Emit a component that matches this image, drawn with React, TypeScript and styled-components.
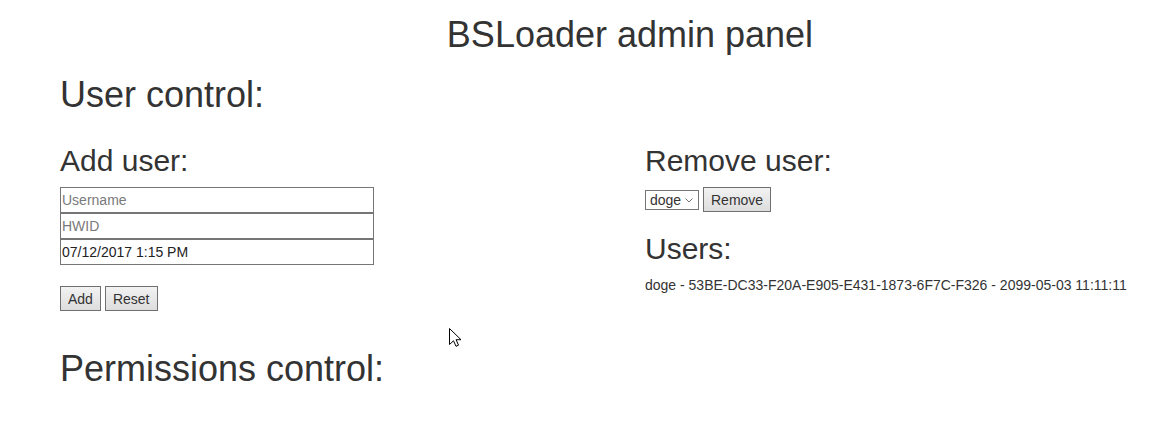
import React from "react";
import styled, { createGlobalStyle } from "styled-components";

const GlobalStyle = createGlobalStyle`
  html, body {
    margin: 0;
    padding: 0;
    background: #ffffff;
    overflow: hidden;
  }
  body {
    font-family: "Liberation Sans", Arial, sans-serif;
    font-size: 14px;
    line-height: 20px;
    color: #333333;
  }
`;

const Page = styled.div`
  position: relative;
  width: 1170px;
  box-sizing: border-box;
  margin-left: 45px;
  padding: 0 15px;
  display: flex;
  flex-direction: column;
`;

const Title = styled.h1`
  font-size: 36px;
  font-weight: 400;
  line-height: 1.1;
  margin: 15px 0 20px;
  text-align: center;
`;

const SectionTitle = styled.h1<{ $top?: number }>`
  font-size: 36px;
  font-weight: 400;
  line-height: 1.1;
  margin: ${(p) => p.$top ?? 0}px 0 10px;
`;

const Row = styled.div`
  display: grid;
  grid-template-columns: 585px 585px;
  margin: 0 -15px;
  align-items: start;
`;

const Col = styled.div`
  padding: 0 15px;
  display: flex;
  flex-direction: column;
  align-items: flex-start;
`;

const SubTitle = styled.h2`
  font-size: 30px;
  font-weight: 400;
  line-height: 1.1;
  margin: 20px 0 10px;
`;

const Fields = styled.div`
  display: flex;
  flex-direction: column;
`;

const TextField = styled.input`
  box-sizing: border-box;
  width: 314px;
  height: 26px;
  margin: 0;
  padding: 0 1px;
  border: 1px solid #767676;
  border-radius: 0;
  font-family: "Liberation Sans", Arial, sans-serif;
  font-size: 14px;
  color: #222222;
  background: #ffffff;
  outline: none;
  &::placeholder {
    color: #7a7a7a;
  }
`;

const ButtonBar = styled.div<{ $top?: number }>`
  display: flex;
  align-items: center;
  gap: 4px;
  margin-top: ${(p) => p.$top ?? 0}px;
`;

const Button = styled.button`
  box-sizing: border-box;
  height: 25px;
  padding: 0 7px;
  margin: 0;
  border: 1px solid #707070;
  border-radius: 0;
  background: linear-gradient(#f2f2f2, #dddddd);
  font-family: "Liberation Sans", Arial, sans-serif;
  font-size: 14px;
  color: #333333;
  cursor: default;
`;

const SelectWrap = styled.div`
  position: relative;
  display: inline-flex;
`;

const Select = styled.select`
  box-sizing: border-box;
  appearance: none;
  -webkit-appearance: none;
  width: 54px;
  height: 20px;
  margin: 0;
  padding: 0 0 0 4px;
  border: 1px solid #767676;
  border-radius: 0;
  background: #ffffff;
  font-family: "Liberation Sans", Arial, sans-serif;
  font-size: 14px;
  color: #333333;
  outline: none;
`;

const Chevron = styled.svg`
  position: absolute;
  right: 6px;
  top: 8px;
  pointer-events: none;
`;

const UserLine = styled.p`
  margin: 0 0 10px;
  font-size: 14px;
  line-height: 20px;
  white-space: nowrap;
`;

const Cursor = styled.svg`
  position: absolute;
  left: 449px;
  top: 328px;
  pointer-events: none;
`;

export default function App() {
  return (
    <>
      <GlobalStyle />
      <Cursor width="13" height="19" viewBox="0 0 13 19">
        <path
          d="M0.5 0.5 L0.5 16.5 L4.5 12.8 L7 18.3 L9.5 17.2 L7.1 11.7 L12 11.7 Z"
          fill="#ffffff"
          stroke="#000000"
          strokeWidth="1"
          strokeLinejoin="miter"
        />
      </Cursor>
      <Page>
        <Title>BSLoader admin panel</Title>
        <SectionTitle>User control:</SectionTitle>
        <Row>
          <Col>
            <SubTitle>Add user:</SubTitle>
            <Fields>
              <TextField placeholder="Username" />
              <TextField placeholder="HWID" />
              <TextField defaultValue="07/12/2017 1:15 PM" />
            </Fields>
            <ButtonBar $top={21}>
              <Button>Add</Button>
              <Button>Reset</Button>
            </ButtonBar>
          </Col>
          <Col>
            <SubTitle>Remove user:</SubTitle>
            <ButtonBar>
              <SelectWrap>
                <Select defaultValue="doge">
                  <option value="doge">doge</option>
                </Select>
                <Chevron width="8" height="5" viewBox="0 0 8 5">
                  <path d="M0.5 0.5 L4 4 L7.5 0.5" fill="none" stroke="#707070" strokeWidth="1" />
                </Chevron>
              </SelectWrap>
              <Button>Remove</Button>
            </ButtonBar>
            <SubTitle>Users:</SubTitle>
            <UserLine>doge - 53BE-DC33-F20A-E905-E431-1873-6F7C-F326 - 2099-05-03 11:11:11</UserLine>
          </Col>
        </Row>
        <SectionTitle $top={38}>Permissions control:</SectionTitle>
      </Page>
    </>
  );
}
